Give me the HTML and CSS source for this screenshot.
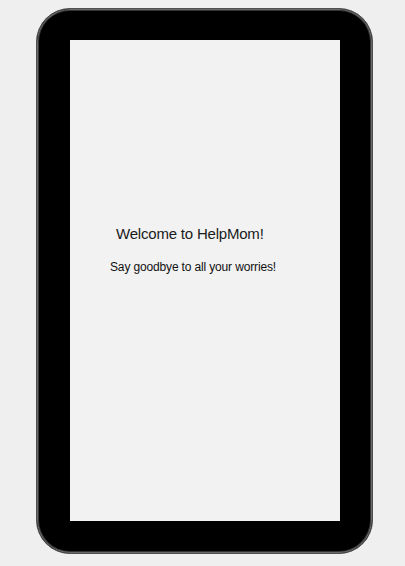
FILE: index.html
```html
<!DOCTYPE html>
<html>
<head>
<meta charset="utf-8">
<link rel="stylesheet" href="styles.css">
</head>
<body>
<div class="device">
  <div class="screen">
    <h1 class="title">Welcome to HelpMom!</h1>
    <p class="subtitle">Say goodbye to all your worries!</p>
  </div>
</div>
</body>
</html>
```
FILE: styles.css
```css
html, body {
  margin: 0;
  padding: 0;
  background: #efefef;
}
body {
  padding: 8px 0 0 36px;
  font-family: "Liberation Sans", Arial, sans-serif;
}
.device {
  box-sizing: border-box;
  width: 337px;
  height: 546px;
  background: #000;
  border: 1px solid #4e4e4e;
  border-radius: 34px;
  box-shadow: inset 0 0 0 1px #6a6a6a, inset 0 0 0 2px #333;
  padding: 31px 32px 32px 33px;
}
.screen {
  width: 270px;
  height: 481px;
  background: #f2f2f2;
  display: flex;
  flex-direction: column;
  padding-top: 185px;
  box-sizing: border-box;
}
.title {
  margin: 0 0 0 46px;
  font-size: 15px;
  line-height: 18px;
  letter-spacing: -0.2px;
  font-weight: normal;
  color: #1a1a1a;
}
.subtitle {
  margin: 17px 0 0 40px;
  font-size: 12px;
  line-height: 14px;
  letter-spacing: -0.15px;
  color: #111;
}
```
